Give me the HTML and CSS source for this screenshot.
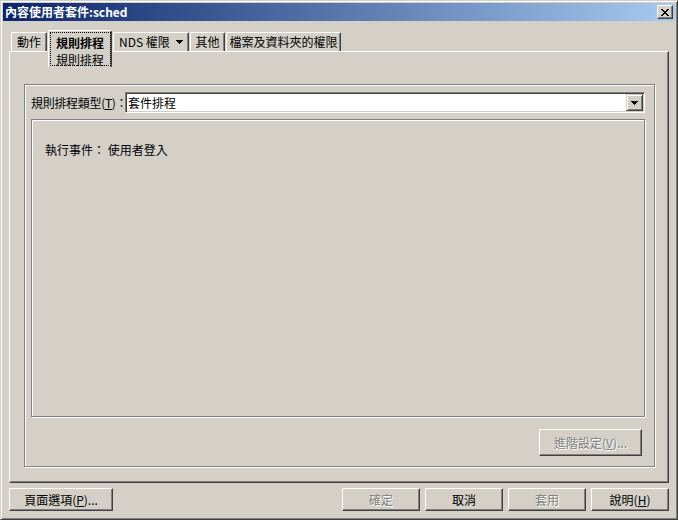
FILE: index.html
```html
<!DOCTYPE html>
<html lang="zh-Hant">
<head>
    <meta charset="UTF-8">
    <title>內容使用者套件:sched</title>
    <link rel="stylesheet" href="styles.css">
</head>
<body>
    <div class="window">
        <div class="titlebar">
            <span class="title">內容使用者套件:sched</span>
            <span class="close-btn">
                <svg width="8" height="7" viewBox="0 0 8 7" shape-rendering="crispEdges">
                    <path d="M0 0h2v1h-2zM6 0h2v1h-2zM1 1h2v1h-2zM5 1h2v1h-2zM2 2h4v1h-4zM3 3h2v1h-2zM2 4h4v1h-4zM1 5h2v1h-2zM5 5h2v1h-2zM0 6h2v1h-2zM6 6h2v1h-2z" fill="#000"/>
                </svg>
            </span>
        </div>

        <div class="tabs">
            <div class="tab tab-action">動作</div>
            <div class="tab tab-active">
                <div class="tab-focus">
                    <span class="tab-name">規則排程</span>
                    <span class="tab-page">規則排程</span>
                </div>
            </div>
            <div class="tab tab-nds">
                <span>NDS 權限</span>
                <svg class="tab-arrow" width="7" height="4" viewBox="0 0 7 4" shape-rendering="crispEdges">
                    <path d="M0 0h7v1h-1v1h-1v1h-1v1h-1v-1h-1v-1h-1v-1h-1z" fill="#000"/>
                </svg>
            </div>
            <div class="tab tab-other">其他</div>
            <div class="tab tab-files">檔案及資料夾的權限</div>
        </div>

        <div class="panel">
            <div class="groupbox">
                <div class="field-row">
                    <label class="field-label">規則排程類型(<u>T</u>)：</label>
                    <div class="combo">
                        <span class="combo-value">套件排程</span>
                        <span class="combo-btn">
                            <svg width="7" height="4" viewBox="0 0 7 4" shape-rendering="crispEdges">
                                <path d="M0 0h7v1h-1v1h-1v1h-1v1h-1v-1h-1v-1h-1v-1h-1z" fill="#000"/>
                            </svg>
                        </span>
                    </div>
                </div>
                <div class="event-box">執行事件： 使用者登入</div>
                <div class="group-actions">
                    <button class="btn btn-advanced" disabled>進階設定(<u>V</u>)...</button>
                </div>
            </div>
        </div>

        <div class="button-row">
            <button class="btn btn-page">頁面選項(<u>P</u>)...</button>
            <div class="spacer"></div>
            <button class="btn" disabled>確定</button>
            <button class="btn">取消</button>
            <button class="btn" disabled>套用</button>
            <button class="btn">說明(<u>H</u>)</button>
        </div>
    </div>
</body>
</html>
```

FILE: styles.css
```css
* {
    box-sizing: border-box;
}
body {
    margin: 0;
    background-color: #d4d0c8;
    font-family: "Noto Sans CJK TC", "Liberation Sans", sans-serif;
    font-size: 12px;
    color: #000;
}
.window {
    width: 678px;
    height: 520px;
    padding: 2px;
    border: 1px solid;
    border-color: #d4d0c8 #404040 #404040 #d4d0c8;
    box-shadow: inset 1px 1px #fff, inset -1px -1px #808080;
    background-color: #d4d0c8;
}

/* title bar */
.titlebar {
    height: 18px;
    display: flex;
    align-items: center;
    justify-content: space-between;
    background: linear-gradient(to right, #0a246a, #a6caf0);
    padding: 0 2px;
}
.title {
    color: #fff;
    font-weight: bold;
    font-size: 12px;
    line-height: 18px;
}
.close-btn {
    width: 16px;
    height: 14px;
    display: flex;
    align-items: center;
    justify-content: center;
    background-color: #d4d0c8;
    border: 1px solid;
    border-color: #fff #404040 #404040 #fff;
    box-shadow: inset -1px -1px #808080;
}
.close-btn svg {
    display: block;
}

/* tab strip */
.tabs {
    height: 30px;
    padding: 9px 0 0 8px;
    display: flex;
    align-items: flex-start;
}
.tab {
    height: 19px;
    margin-top: 2px;
    margin-right: 1px;
    border: 1px solid;
    border-bottom: none;
    border-color: #fff #404040 #404040 #fff;
    border-radius: 2px 2px 0 0;
    box-shadow: inset -1px 0 #808080;
    display: flex;
    align-items: center;
    justify-content: center;
    white-space: nowrap;
    line-height: 16px;
}
.tab-action { width: 36px; }
.tab-nds { width: 76px; justify-content: flex-start; padding-left: 5px; }
.tab-other { width: 35px; }
.tab-files { width: 115px; }
.tab-arrow {
    margin-left: 6px;
}
.tab-active {
    width: 64px;
    height: 37px;
    margin-top: 0;
    position: relative;
    z-index: 1;
    background-color: #d4d0c8;
    align-items: flex-start;
    padding-top: 1px;
}
.tab-focus {
    width: 61px;
    height: 34px;
    border: 1px dotted #000;
    display: flex;
    flex-direction: column;
    align-items: center;
    line-height: 17px;
    padding-top: 1px;
}
.tab-name {
    font-weight: bold;
}

/* property panel */
.panel {
    width: 660px;
    height: 432px;
    margin: 0 6px;
    padding: 32px 13px 0 14px;
    border: 1px solid;
    border-color: #fff #404040 #404040 #fff;
    box-shadow: inset -1px -1px #808080;
}
.groupbox {
    height: 383px;
    padding: 7px 9px 0 6px;
    border: 1px solid #808080;
    box-shadow: inset 1px 1px #fff, 1px 1px #fff;
}
.field-row {
    height: 21px;
    display: flex;
    align-items: center;
}
.field-label {
    width: 94px;
    white-space: nowrap;
    letter-spacing: -0.3px;
}
.combo {
    flex: 1;
    height: 21px;
    display: flex;
    align-items: center;
    justify-content: space-between;
    background-color: #fff;
    border: 1px solid;
    border-color: #808080 #fff #fff #808080;
    box-shadow: inset 1px 1px #404040, inset -1px -1px #d4d0c8;
    padding: 1px;
}
.combo-value {
    padding-left: 1px;
}
.combo-btn {
    width: 17px;
    height: 17px;
    display: flex;
    align-items: center;
    justify-content: center;
    background-color: #d4d0c8;
    border: 1px solid;
    border-color: #d4d0c8 #404040 #404040 #d4d0c8;
    box-shadow: inset 1px 1px #fff, inset -1px -1px #808080;
}
.event-box {
    height: 298px;
    margin-top: 6px;
    padding: 22px 0 0 13px;
    border: 1px solid #808080;
    box-shadow: inset 1px 1px #fff, 1px 1px #fff;
    line-height: 16px;
}
.group-actions {
    display: flex;
    justify-content: flex-end;
    margin-top: 12px;
    padding-right: 3px;
}

/* buttons */
.btn {
    width: 78px;
    height: 23px;
    padding: 0;
    font-family: inherit;
    font-size: 12px;
    color: #000;
    background-color: #d4d0c8;
    border: 1px solid;
    border-color: #fff #404040 #404040 #fff;
    box-shadow: inset -1px -1px #808080;
    border-radius: 0;
}
.btn:disabled {
    color: #808080;
    text-shadow: 1px 1px #fff;
}
.btn-advanced {
    width: 103px;
    height: 27px;
}
.btn-page {
    width: 104px;
}
.button-row {
    display: flex;
    gap: 5px;
    margin-top: 5px;
    padding: 0 6px;
}
.spacer {
    flex: 1;
}
```
